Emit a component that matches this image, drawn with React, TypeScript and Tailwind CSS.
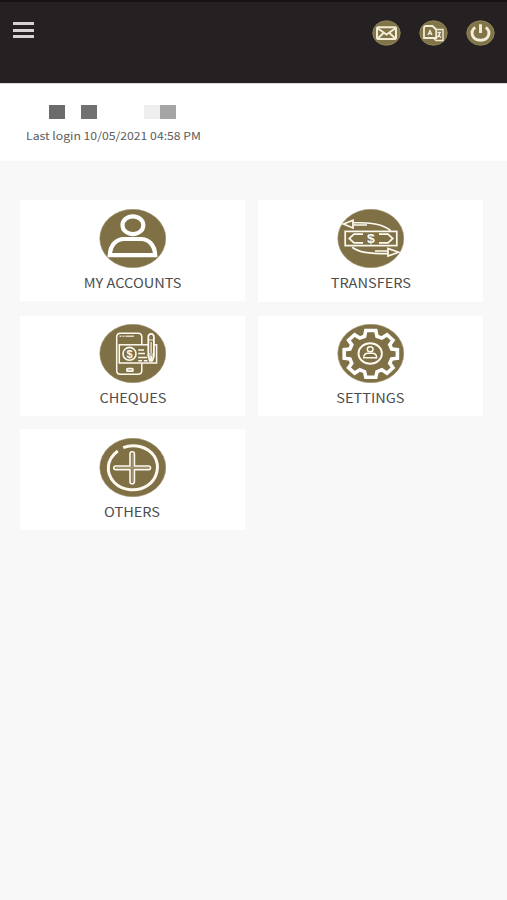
import React from 'react';

const HeaderButton = ({ label, children }: { label: string; children: React.ReactNode }) => (
    <button aria-label={label} className="h-[26px] w-[29px]">
        <svg viewBox="0 0 29 26" className="h-full w-full" fill="none" stroke="#f3ecd8" strokeWidth="2">
            <ellipse cx="14.5" cy="13" rx="13.7" ry="12.2" fill="#807448" stroke="#8f8458" strokeWidth="1" />
            {children}
        </svg>
    </button>
);

const Badge = ({ children }: { children: React.ReactNode }) => (
    <svg viewBox="0 0 67 59" className="h-[59px] w-[67px] shrink-0" fill="none" stroke="#fffaf0">
        <ellipse cx="33.8" cy="29.5" rx="33" ry="29.2" fill="#7f7046" stroke="#a39770" strokeWidth="0.6" />
        {children}
    </svg>
);

const AccountsIcon = () => (
    <Badge>
        <g stroke="#ffffff" strokeWidth="4.2">
            <ellipse cx="33.9" cy="16.2" rx="10.4" ry="8.9" />
            <path d="M10.8 46.2 C11.2 36 17.5 30 25 30 H42 C49.5 30 55.8 36 56.2 46.2 Z" />
        </g>
    </Badge>
);

const TransfersIcon = () => (
    <Badge>
        <g strokeWidth="1.7">
            <rect x="8.2" y="22.4" width="51.6" height="14.2" />
            <path d="M26 25.2 H17 L12.2 29.5 L17 33.8 H26 M42 25.2 H51 L55.8 29.5 L51 33.8 H42" />
            <path d="M53.5 21.5 C46 15.5 36 13.5 16 13.5 M30 16 H16 V19 L6.5 15 L16 11.2 V19" />
            <path d="M15.2 38.3 C22 43.5 31 44.7 51 44.7 M38 42 H51 V39.4 L61.5 43.2 L51 47 V39.4" />
        </g>
        <text x="34" y="33.8" textAnchor="middle" fontSize="12" fontWeight="700" fontFamily="Liberation Sans, sans-serif" fill="#fffaf0" stroke="none" textLength="7.8" lengthAdjust="spacingAndGlyphs">$</text>
    </Badge>
);

const ChequesIcon = () => (
    <Badge>
        <g strokeWidth="1.5">
            <path d="M42.8 20.3 V13 C42.8 10.5 41.5 9.2 39 9.2 H21.5 C19 9.2 17.7 10.5 17.7 13 V46.5 C17.7 49 19 50.3 21.5 50.3 H39 C41.5 50.3 42.8 49 42.8 46.5 V39.5" />
            <path d="M20.5 12.3 H35" strokeWidth="1.6" strokeDasharray="2 1 2 1 9" opacity="0.75" />
            <rect x="20.3" y="20.8" width="37.3" height="18.2" />
            <ellipse cx="30.5" cy="29.8" rx="6.5" ry="6.4" strokeWidth="1.6" />
            <rect x="27.8" y="44.7" width="6.2" height="2.5" rx="1" strokeWidth="1.7" />
            <path d="M39.2 26 H45 M39.2 29.6 H46 M39.2 33.5 H48 M39.2 36.7 H43 M44.8 36.7 H48.5 M50 36.7 H53" strokeWidth="1.5" />
            <path d="M49.3 32 V13.5 Q49.3 9.8 52.1 9.8 Q54.9 9.8 54.9 13.5 V32 L53.4 36.5 H50.8 Z" fill="#7f7046" strokeWidth="1.8" />
            <path d="M49.5 16 H54.5 M49.5 30 H54.5 M49.5 32 H54.5 M52.1 18 V29" strokeWidth="1.2" />
            <path d="M52.1 32 V36" strokeWidth="1.8" />
        </g>
        <text x="30.5" y="33.8" textAnchor="middle" fontSize="11" fontWeight="700" fontFamily="Liberation Sans, sans-serif" fill="#fffaf0" stroke="none">$</text>
    </Badge>
);

const SettingsIcon = () => (
    <Badge>
        <path
            strokeWidth="3.6"
            stroke="#ffffff"
            d="M28.8 6.5 H38.8 L40 12.3 L44.8 14.1 L50 10.7 L56 16.3 L52.8 20.8 L54.7 25 L60.4 25.6 V34.2 L54.7 34.9 L52.8 39.2 L56 43.8 L50 49.2 L44.8 45.8 L40 47.7 L38.8 53.3 H28.8 L27.6 47.7 L22.8 45.8 L17.6 49.2 L11.6 43.8 L14.8 39.2 L12.9 34.9 L7.2 34.2 V25.6 L12.9 25 L14.8 20.8 L11.6 16.3 L17.6 10.7 L22.8 14.1 L27.6 12.3 Z"
        />
        <ellipse cx="33.2" cy="29.5" rx="11.7" ry="10.2" strokeWidth="1.9" />
        <ellipse cx="33.2" cy="25.3" rx="2.9" ry="2.5" strokeWidth="1.4" />
        <path d="M26.7 33.8 C26.8 30.8 28.7 29.2 31 29.2 H35.4 C37.7 29.2 39.6 30.8 39.7 33.8 Z" strokeWidth="1.4" />
    </Badge>
);

const OthersIcon = () => (
    <Badge>
        <path d="M24.2 9.6 C35.5 5 49 9 55.2 18 C61.5 28 58.2 41 48.5 47.5 C38.5 54.2 23.5 53 15.3 44.5 C6.5 35.2 7.2 21.5 18.8 13" strokeWidth="3" />
        <path
            d="M31 28 V16 Q31 13.8 33.2 13.8 Q35.4 13.8 35.4 16 V28 H49.5 Q51.5 28 51.5 29.8 Q51.5 31.6 49.5 31.6 H35.4 V43.5 Q35.4 45.8 33.2 45.8 Q31 45.8 31 43.5 V31.6 H16.8 Q14.8 31.6 14.8 29.8 Q14.8 28 16.8 28 Z"
            strokeWidth="1.6"
        />
        <path d="M33.2 16 V44 M17 29.8 H49.5" stroke="#b9af90" strokeWidth="0.8" />
    </Badge>
);

type TileProps = { label: string; icon: React.ReactNode; className: string };

const Tile = ({ label, icon, className }: TileProps) => (
    <button className={`flex flex-col items-center bg-white ${className}`}>
        {icon}
        <span className="mt-[5px] origin-center scale-x-[1.12] whitespace-nowrap text-[13px] leading-[20px] text-[#4d4d4d]">
            {label}
        </span>
    </button>
);

const tiles: TileProps[] = [
    { label: 'MY ACCOUNTS', icon: <AccountsIcon />, className: 'h-[101px] pt-[9px] mb-[15px]' },
    { label: 'TRANSFERS', icon: <TransfersIcon />, className: 'h-[102px] pt-[9px] mb-[14px]' },
    { label: 'CHEQUES', icon: <ChequesIcon />, className: 'h-[100px] pt-[8px] mb-[13px]' },
    { label: 'SETTINGS', icon: <SettingsIcon />, className: 'h-[100px] pt-[8px] mb-[13px]' },
    { label: 'OTHERS', icon: <OthersIcon />, className: 'h-[101px] pt-[9px]' },
];

export default function App() {
    return (
        <div className="flex min-h-[900px] w-full flex-col bg-[#f8f8f8] font-['Noto_Sans_CJK_SC',sans-serif]">
            <header className="flex h-[83px] items-start justify-between border-t-2 border-[#171315] bg-[#252122] pl-[13px] pr-[12px]">
                <button aria-label="Menu" className="mt-[20px] flex w-[21px] flex-col gap-[3.5px]">
                    <span className="h-[3px] bg-[#d8d2d4]" />
                    <span className="h-[3px] bg-[#d8d2d4]" />
                    <span className="h-[3px] bg-[#d8d2d4]" />
                </button>
                <div className="mt-[18px] flex gap-[18px]">
                    <HeaderButton label="Messages">
                        <rect x="5" y="7.3" width="19" height="11.8" rx="1" />
                        <path d="M6 8.5 L14.5 14.5 L23 8.5 M6 18.3 L11.5 13 M23 18.3 L17.5 13" strokeWidth="1.9" />
                    </HeaderButton>
                    <HeaderButton label="Language">
                        <path d="M5 18 V8.2 Q5 6 7.2 6 H13.5 L17.2 9.5 V18 Z" strokeWidth="1.8" />
                        <path d="M9 15 L11 10.5 L13 15 M9.7 13.7 H12.3" strokeWidth="1.3" />
                        <path d="M17.5 9.5 H24 V20.5 H17 L14.5 18 M18.5 12.5 H22 M20.5 12.5 V15 L18 17.5 M19 15 L22 17.5" strokeWidth="1.4" />
                    </HeaderButton>
                    <HeaderButton label="Log out">
                        <path d="M9.2 7.3 C3.8 11.3 5.5 20.2 14.5 20.2 C23.5 20.2 25.2 11.3 19.8 7.3 M14.5 4.2 V13" strokeWidth="2.9" />
                    </HeaderButton>
                </div>
            </header>

            <section className="h-[78px] border-t border-[#d8d6d7] bg-white pt-[21px]">
                {/* Masked customer name */}
                <div className="ml-[49px] flex h-[14px]">
                    <span className="w-[16px] bg-[#6b6b6b]" />
                    <span className="ml-[16px] w-[16px] bg-[#717171]" />
                    <span className="ml-[47px] w-[16px] bg-[#eeeeee]" />
                    <span className="w-[16px] bg-[#a5a5a5]" />
                </div>
                <p className="ml-[26px] mt-[8px] w-fit origin-left scale-x-[1.11] whitespace-nowrap text-[11px] leading-[16px] text-[#5c5c5c]">
                    Last login 10/05/2021 04:58 PM
                </p>
            </section>

            <main className="grid grid-cols-2 gap-x-[13px] pl-[20px] pr-[24px] pt-[39px]">
                {tiles.map((tile) => (
                    <Tile key={tile.label} {...tile} />
                ))}
            </main>
        </div>
    );
}
